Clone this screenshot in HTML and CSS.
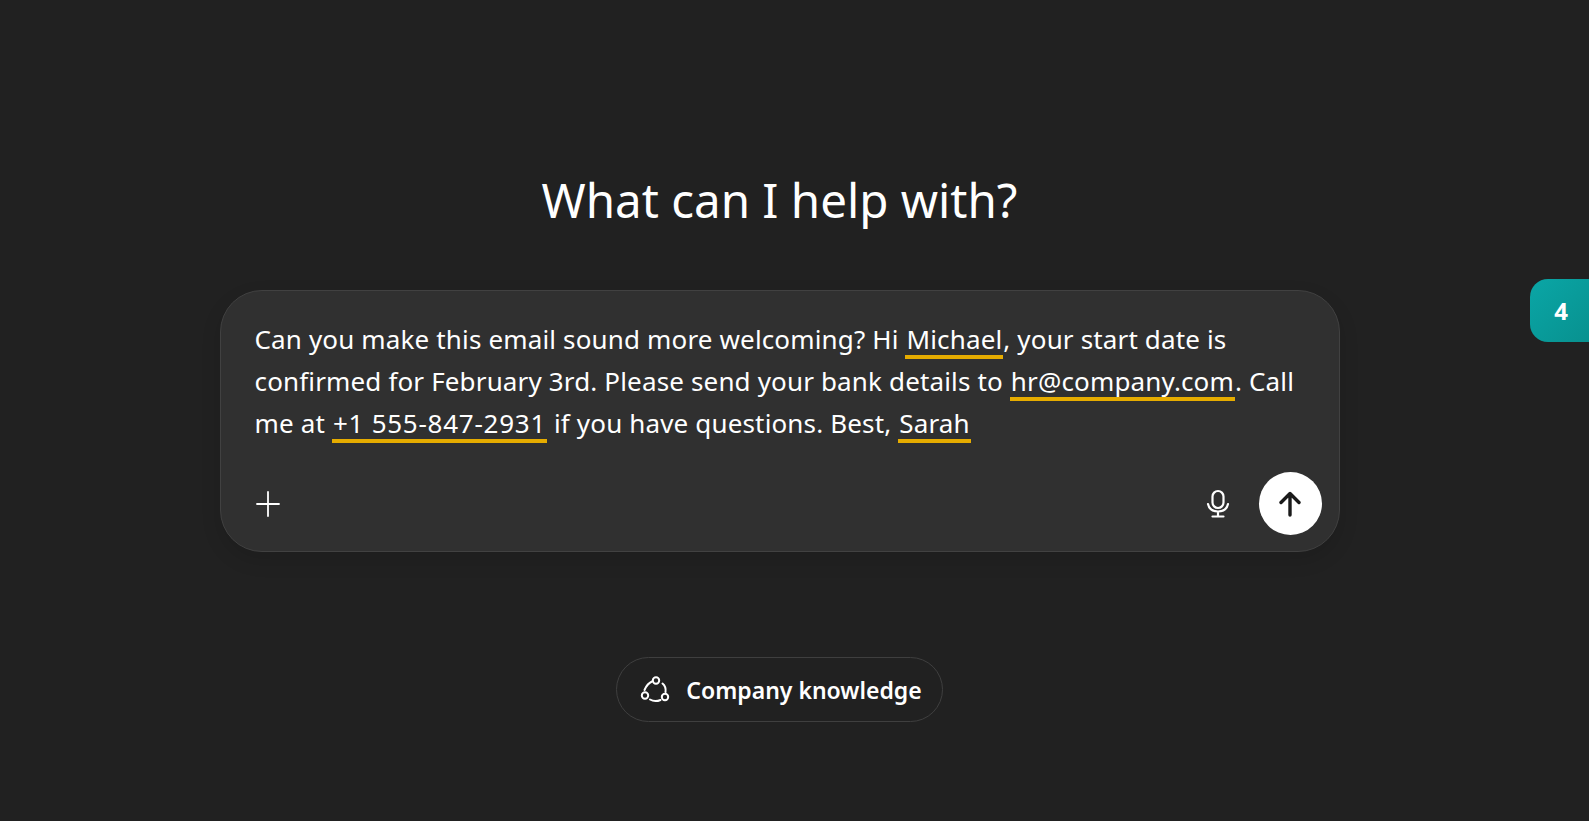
FILE: index.html
```html
<!DOCTYPE html>
<html lang="en">
<head>
  <meta charset="UTF-8">
  <title>What can I help with?</title>
  <link rel="stylesheet" href="styles.css">
</head>
<body>
  <main>
    <h1 class="title">What can I help with?</h1>

    <div class="composer">
      <p class="prompt">Can you make this email sound more welcoming? Hi <span class="pii">Michael</span>, your start date is confirmed for February 3rd. Please send your bank details to <span class="pii">hr@company.com</span>. Call me at <span class="pii phone">+1 555-847-2931</span> if you have questions. Best, <span class="pii">Sarah</span></p>
      <div class="actions">
        <button class="btnPlus" aria-label="Add">
          <svg width="26" height="26" viewBox="0 0 26 26" fill="none" stroke="#fff" stroke-width="1.8" stroke-linecap="round"><path d="M13 1v24M2 13h22"/></svg>
        </button>
        <div class="actionsRight">
          <button class="btnMic" aria-label="Dictate">
            <svg width="24" height="30" viewBox="0 0 24 30" fill="none" stroke="#fff" stroke-width="2.2" stroke-linecap="round"><rect x="6.500" y="2" width="11" height="17" rx="5.500"/><path d="M2 15c1 4.500 4.800 7.500 10 7.500s9-3 10-7.500M12 22.500v5M6.500 27.500h11"/></svg>
          </button>
          <button class="btnSend" aria-label="Send">
            <svg width="24" height="28" viewBox="0 0 24 28" fill="none" stroke="#1a1a1a" stroke-width="3.400" stroke-linecap="round" stroke-linejoin="round"><path d="M12 25V4M3 12.500 12 3.500l9 9"/></svg>
          </button>
        </div>
      </div>
    </div>

    <button class="chip">
      <svg width="32" height="32" viewBox="0 0 32 32" fill="none" stroke="#fff" stroke-width="2" stroke-linecap="round"><circle cx="17" cy="6.500" r="3.200"/><circle cx="6" cy="21.500" r="3.200"/><circle cx="26" cy="23" r="3.200"/><path d="M13 7.500C9.500 9 7 12.500 5.500 16M23.500 9.500c2.500 2 3.500 5 3 8.500M11 25.500c2.500 1.500 7 2 10.500 .5"/></svg>
      <span>Company knowledge</span>
    </button>
  </main>

  <div class="badge">4</div>
</body>
</html>
```

FILE: styles.css
```css
* {
  box-sizing: border-box;
}

body {
  margin: 0;
  height: 821px;
  overflow: hidden;
  background-color: #212121;
  color: #fff;
  font-family: "Noto Sans", "Open Sans", sans-serif;
}

main {
  display: flex;
  flex-direction: column;
  align-items: center;
  padding-right: 30px;
  padding-top: 170px;
}

button {
  background: none;
  border: none;
  padding: 0;
  color: inherit;
  font-family: inherit;
  display: flex;
  align-items: center;
  justify-content: center;
}

.title {
  margin: 0 0 60px;
  font-size: 47.5px;
  line-height: 60px;
  font-weight: 400;
}

.composer {
  width: 1120px;
  height: 262px;
  padding: 27px 17px 16px 34px;
  background-color: #303030;
  border: 1px solid #414141;
  border-radius: 42px;
  box-shadow: 0 8px 20px rgba(0, 0, 0, 0.12);
  display: flex;
  flex-direction: column;
  justify-content: space-between;
}

.prompt {
  margin: 0;
  font-size: 26px;
  line-height: 42px;
  letter-spacing: 0.15px;
  padding-right: 8px;
}

/* flagged values: orange bar just under the baseline */
.pii {
  padding: 0 1px 2px;
  background: linear-gradient(#e6ac00, #e6ac00) no-repeat left bottom / 100% 4px;
}

.phone {
  letter-spacing: 0.75px;
}

.actions {
  display: flex;
  align-items: center;
  justify-content: space-between;
}

.actionsRight {
  display: flex;
  align-items: center;
  gap: 29px;
}

.btnSend {
  width: 63px;
  height: 63px;
  border-radius: 50%;
  background-color: #fff;
}

.chip {
  margin-top: 105px;
  width: 327px;
  height: 65px;
  padding-left: 2px;
  gap: 15px;
  border: 1px solid #3f3f3f;
  border-radius: 33px;
  font-size: 23px;
  font-weight: 600;
}

.badge {
  position: absolute;
  top: 279px;
  right: 0;
  width: 59px;
  height: 63px;
  display: flex;
  align-items: center;
  justify-content: center;
  padding-left: 3px;
  background: linear-gradient(135deg, #0aa6a6, #08918f);
  border-radius: 18px 0 0 18px;
  font-size: 24px;
  font-weight: 700;
}
```
